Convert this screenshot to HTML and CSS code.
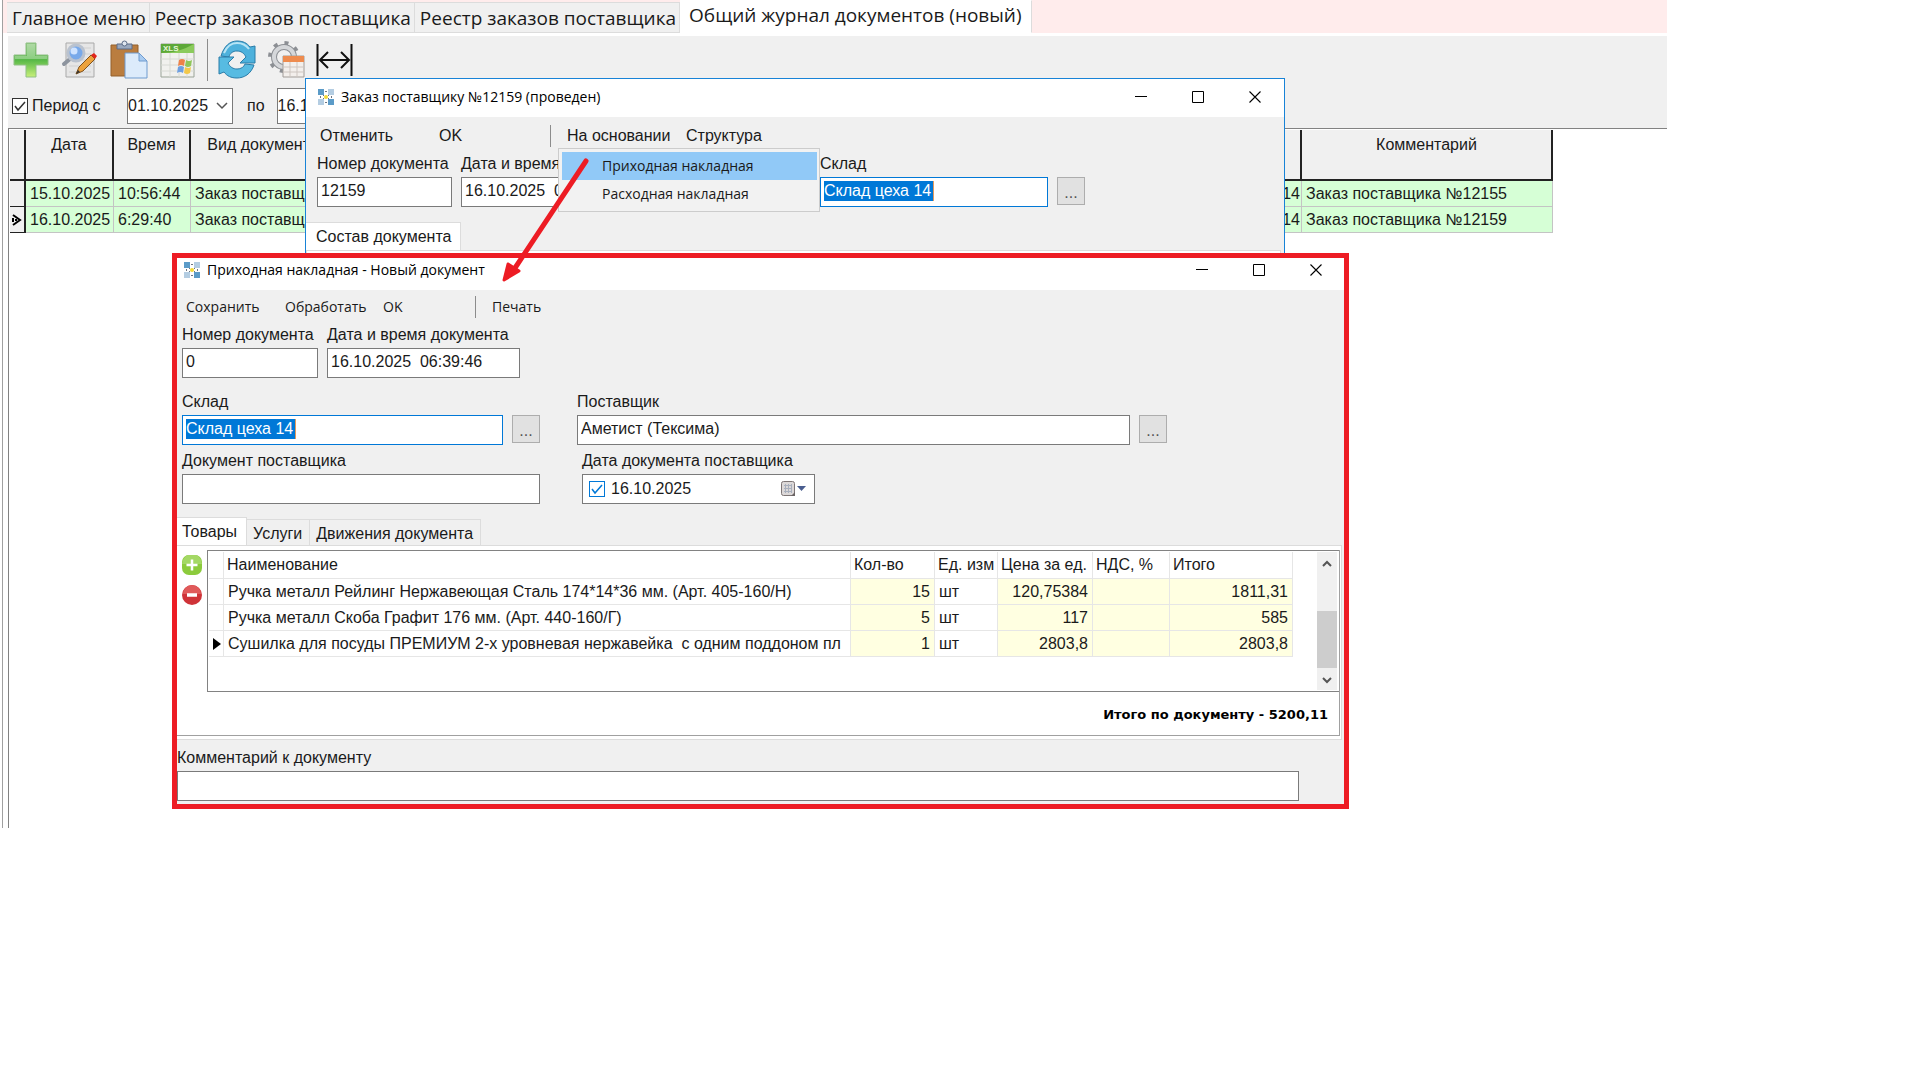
FILE: index.html
```html
<!DOCTYPE html>
<html lang="ru">
<head>
    <meta charset="UTF-8">
    <meta name="viewport" content="width=device-width, initial-scale=1.0">
    <title>Общий журнал документов</title>
    <link rel="stylesheet" href="styles.css">
</head>
<body>

<svg class="sprite" aria-hidden="true">
    <symbol id="logo" viewBox="0 0 16 16">
        <path fill="#5b9bc8" d="M0 0h6v6H0zM10 10h6v6h-6z"/>
        <path fill="#b4cde2" d="M10 0h6v6h-6zM0 10h6v6H0z"/>
        <path fill="#6c7480" d="M7 2h2v1H7zM2 7h1v2H2zM13 7h1v2h-1zM7 13h2v1H7zM5 6h1v1H5zM10 6h1v1h-1zM5 9h1v1H5zM10 9h1v1h-1z"/>
        <circle cx="8" cy="8" r="2" fill="#f3d936"/>
    </symbol>
    <symbol id="min" viewBox="0 0 12 12"><path d="M0 5.500h12" stroke="#000"/></symbol>
    <symbol id="max" viewBox="0 0 12 12"><path d="M.5.5h11v11H.5z" fill="none" stroke="#000"/></symbol>
    <symbol id="close" viewBox="0 0 12 12"><path d="M.5.5l11 11M11.5.5l-11 11" stroke="#000" stroke-width="1.1"/></symbol>
</svg>

<main class="app">
    <nav class="app-tabs">
        <button class="app-tab">Главное меню</button>
        <button class="app-tab">Реестр заказов поставщика</button>
        <button class="app-tab">Реестр заказов поставщика</button>
        <button class="app-tab active">Общий журнал документов (новый)</button>
    </nav>

    <div class="journal">
        <div class="toolbar">
            <button class="tool" aria-label="Добавить">
                <svg viewBox="0 0 40 40">
                    <linearGradient id="gPlus" x2="0" y2="1"><stop offset="0" stop-color="#8fca80"/><stop offset=".5" stop-color="#57b847"/><stop offset="1" stop-color="#c8f07a"/></linearGradient>
                    <path d="M15 3h10v12h12v10H25v12H15V25H3V15h12z" fill="url(#gPlus)" stroke="#8fbf85"/>
                    <path d="M16 4h8v12h12v3H4v-3h12z" fill="#fff" opacity=".3"/>
                </svg>
            </button>
            <button class="tool" aria-label="Просмотр">
                <svg viewBox="0 0 40 40">
                    <path d="M6 3h28v34H6z" fill="#e6e6e6" stroke="#a9a9a9"/>
                    <path d="M9 8h22M9 14h22M9 20h22M9 26h22M9 32h22" stroke="#d0d0d0"/>
                    <path d="M10 19l-6 5" stroke="#8d949e" stroke-width="4" stroke-linecap="round"/>
                    <circle cx="16" cy="13" r="8" fill="#78a9ea" stroke="#b9c2cf" stroke-width="3"/>
                    <circle cx="14" cy="11" r="3.500" fill="#cfe3ff"/>
                    <path d="M16 34l3-7L31 15l4 4-12 12z" fill="#eda23c" stroke="#80531f"/>
                    <path d="M31 15l3-2 3 3-2 3z" fill="#e2261d"/>
                    <path d="M16 34l2-4 2 2z" fill="#333"/>
                </svg>
            </button>
            <button class="tool" aria-label="Вставить">
                <svg viewBox="0 0 40 40">
                    <path d="M2 5h27v31H2z" fill="#ba7d3f" stroke="#93602c"/>
                    <path d="M8 4h15v5H8z" fill="#9aa9bf" stroke="#5c6d88"/>
                    <circle cx="15.500" cy="3.500" r="2.500" fill="#dfe6ef" stroke="#5c6d88"/>
                    <path d="M16 13h14l8 8v17H16z" fill="#dcebfb" stroke="#6f9bcf"/>
                    <path d="M30 13v8h8z" fill="#a9cbf0" stroke="#6f9bcf"/>
                </svg>
            </button>
            <button class="tool" aria-label="Выгрузить в XLS">
                <svg viewBox="0 0 40 40">
                    <path d="M3 4h33v33H3z" fill="#f1f1ee" stroke="#9aa397"/>
                    <path d="M3 4h33v9H3z" fill="#5da838"/>
                    <path d="M3 13c12 0 22-3 33-9v9z" fill="#8bcb5c"/>
                    <path d="M3 19h33M3 25h33M3 31h33M12 13v24M21 13v24M29 13v24" stroke="#d8dad5"/>
                    <text x="5" y="11" class="xls">XLS</text>
                    <path d="M21 20q3-2 6 0l-1 6q-3-2-6 0z" fill="#ee8148"/>
                    <path d="M28 20q3 2 6 0l-1 6q-3 2-6 0z" fill="#8fc65a"/>
                    <path d="M20 27q3-2 6 0l-1 6q-3-2-6 0z" fill="#6f9fe0"/>
                    <path d="M27 27q3 2 6 0l-1 6q-3 2-6 0z" fill="#f2c84b"/>
                </svg>
            </button>
            <span class="tool-sep"></span>
            <button class="tool" aria-label="Обновить">
                <svg viewBox="0 0 40 40">
                    <path d="M4 16C7 6 13 1 20 1c6 0 10 2 13 6l5-1v17H23l6-6c-2-4-5-6-9-6s-7 2-8 6z" fill="#4db1dc" stroke="#2b7ca8"/>
                    <path d="M37 25c-3 9-10 13-17 13-6 0-10-2-13-6l-5 2V17h15l-6 6c2 4 5 6 9 6s7-2 8-5z" fill="#57bbe2" stroke="#2b7ca8"/>
                    <path d="M7 13c3-7 8-10 13-10 5 0 9 2 12 6" fill="none" stroke="#b7e4f5" stroke-width="2"/>
                </svg>
            </button>
            <button class="tool" aria-label="Настройка">
                <svg viewBox="0 0 40 40">
                    <circle cx="18" cy="17" r="14" fill="none" stroke="#8c8f94" stroke-width="4" stroke-dasharray="4 7"/>
                    <circle cx="18" cy="17" r="10" fill="none" stroke="#8c8f94" stroke-width="6"/>
                    <circle cx="18" cy="17" r="10" fill="none" stroke="#d5d7da" stroke-width="4"/>
                    <path d="M17 16h21v21H17z" fill="#f3efec" stroke="#a19c98"/>
                    <path d="M17 16h21v6H17z" fill="#ee8b4e"/>
                    <path d="M17 27h21M17 32h21M24 22v15M31 22v15" stroke="#cdc5c0"/>
                </svg>
            </button>
            <button class="tool" aria-label="Ширина колонок">
                <svg viewBox="0 0 40 40">
                    <path d="M2.500 4v32M36.500 4v32M6 20h27M13 12l-8 8 8 8M26 12l8 8-8 8" fill="none" stroke="#111" stroke-width="2"/>
                </svg>
            </button>
        </div>

        <div class="period">
            <input type="checkbox" id="period" class="check" checked>
            <label for="period">Период с</label>
            <select class="date-select" aria-label="Начало периода"><option>01.10.2025</option></select>
            <label for="dateTo">по</label>
            <select class="date-select" id="dateTo"><option>16.10.2025</option></select>
        </div>

        <div class="journal-grid">
            <table class="journal-table">
                <colgroup><col class="c-mark"><col class="c-date"><col class="c-time"><col class="c-kind"><col><col class="c-comment"></colgroup>
                <thead>
                    <tr><th></th><th>Дата</th><th>Время</th><th>Вид документа</th><th>Склад</th><th>Комментарий</th></tr>
                </thead>
                <tbody>
                    <tr><td class="mark"></td><td>15.10.2025</td><td>10:56:44</td><td>Заказ поставщика</td><td class="num">Склад цеха 14</td><td>Заказ поставщика №12155</td></tr>
                    <tr>
                        <td class="mark"><svg viewBox="0 0 10 14"><path d="M1 2l7 5-7 5M1 5v4M4 6v2" fill="none" stroke="#000" stroke-width="2"/></svg></td>
                        <td>16.10.2025</td><td>6:29:40</td><td>Заказ поставщика</td><td class="num">Склад цеха 14</td><td>Заказ поставщика №12159</td>
                    </tr>
                </tbody>
            </table>
        </div>
    </div>
</main>

<!-- Заказ поставщику -->
<section class="window order">
    <header class="titlebar">
        <svg class="logo"><use href="#logo"/></svg>
        <span class="title">Заказ поставщику №12159 (проведен)</span>
        <button class="win-btn" aria-label="Свернуть"><svg><use href="#min"/></svg></button>
        <button class="win-btn" aria-label="Развернуть"><svg><use href="#max"/></svg></button>
        <button class="win-btn" aria-label="Закрыть"><svg><use href="#close"/></svg></button>
    </header>
    <div class="menubar">
        <button>Отменить</button>
        <button>OK</button>
        <span class="menu-sep"></span>
        <button>На основании</button>
        <button>Структура</button>
    </div>
    <div class="fields">
        <div class="field">
            <label for="orderNum">Номер документа</label>
            <input type="text" id="orderNum" value="12159">
        </div>
        <div class="field">
            <label for="orderDate">Дата и время документа</label>
            <input type="text" id="orderDate" value="16.10.2025&nbsp; 06:29:40">
        </div>
        <div class="field">
            <label for="orderStore">Склад</label>
            <input type="text" id="orderStore" class="selected" value="Склад цеха 14">
        </div>
        <button class="pick" aria-label="Выбрать склад">...</button>
    </div>
    <div class="tabs">
        <button class="tab active">Состав документа</button>
    </div>
    <div class="order-page"></div>
</section>

<div class="popup">
    <button class="popup-item current">Приходная накладная</button>
    <button class="popup-item">Расходная накладная</button>
</div>

<!-- Приходная накладная -->
<section class="window invoice">
    <header class="titlebar">
        <svg class="logo"><use href="#logo"/></svg>
        <span class="title">Приходная накладная - Новый документ</span>
        <button class="win-btn" aria-label="Свернуть"><svg><use href="#min"/></svg></button>
        <button class="win-btn" aria-label="Развернуть"><svg><use href="#max"/></svg></button>
        <button class="win-btn" aria-label="Закрыть"><svg><use href="#close"/></svg></button>
    </header>
    <div class="menubar">
        <button>Сохранить</button>
        <button>Обработать</button>
        <button>OK</button>
        <span class="menu-sep"></span>
        <button>Печать</button>
    </div>
    <div class="form">
        <div class="form-row">
            <div class="field w-num">
                <label for="num">Номер документа</label>
                <input type="text" id="num" value="0">
            </div>
            <div class="field w-datetime">
                <label for="datetime">Дата и время документа</label>
                <input type="text" id="datetime" value="16.10.2025&nbsp; 06:39:46">
            </div>
        </div>
        <div class="form-row party">
            <div class="with-pick w-half">
                <div class="field">
                    <label for="store">Склад</label>
                    <input type="text" id="store" class="selected" value="Склад цеха 14">
                </div>
                <button class="pick" aria-label="Выбрать склад">...</button>
            </div>
            <div class="with-pick supplier">
                <div class="field">
                    <label for="supplier">Поставщик</label>
                    <input type="text" id="supplier" value="Аметист (Тексима)">
                </div>
                <button class="pick" aria-label="Выбрать поставщика">...</button>
            </div>
        </div>
        <div class="form-row document">
            <div class="field w-half">
                <label for="supDoc">Документ поставщика</label>
                <input type="text" id="supDoc">
            </div>
            <div class="field w-supdate">
                <label for="supDate">Дата документа поставщика</label>
                <div class="datebox">
                    <input type="checkbox" class="check blue" aria-label="Указать дату" checked>
                    <input type="text" id="supDate" value="16.10.2025">
                    <button aria-label="Календарь">
                        <svg viewBox="0 0 26 18">
                            <rect x="1.500" y="1.500" width="13" height="14" rx="2" fill="#dcd8d8" stroke="#7d7575"/>
                            <path d="M4 5.500h8M4 8.500h8M4 11.500h8M5.500 4v9M8.500 4v9M11.500 4v9" stroke="#a9b0bd"/>
                            <path d="M11 16l4-4v4z" fill="#6b6464"/>
                            <path d="M17 6h9l-4.500 5z" fill="#4a5d8f"/>
                        </svg>
                    </button>
                </div>
            </div>
        </div>
    </div>
    <div class="tabs">
        <button class="tab active">Товары</button>
        <button class="tab">Услуги</button>
        <button class="tab">Движения документа</button>
    </div>
    <div class="panel">
        <div class="goods">
            <div class="goods-top">
                <div class="row-btns">
                    <button aria-label="Добавить строку">
                        <svg viewBox="0 0 20 20"><rect width="20" height="20" rx="7" fill="#8ccb3c"/><path d="M0 9a9 9 0 0 1 20 0z" fill="#a4d865"/><path d="M10 4.500v11M4.500 10h11" stroke="#fff" stroke-width="2.500"/></svg>
                    </button>
                    <button aria-label="Удалить строку">
                        <svg viewBox="0 0 20 20"><circle cx="10" cy="10" r="10" fill="#cf3338"/><path d="M1 9a9 9 0 0 1 18 0z" fill="#e05a5a"/><path d="M5 10h10" stroke="#fff" stroke-width="3.500"/></svg>
                    </button>
                </div>
                <div class="goods-grid">
                    <div class="goods-scroll">
                        <table class="goods-table">
                            <colgroup><col class="g-mark"><col><col class="g-qty"><col class="g-unit"><col class="g-price"><col class="g-vat"><col class="g-sum"></colgroup>
                            <thead>
                                <tr><th></th><th>Наименование</th><th>Кол-во</th><th>Ед. изм</th><th>Цена за ед.</th><th>НДС, %</th><th>Итого</th></tr>
                            </thead>
                            <tbody>
                                <tr><td></td><td>Ручка металл Рейлинг Нержавеющая Сталь 174*14*36 мм. (Арт. 405-160/Н)</td><td class="calc">15</td><td>шт</td><td class="calc">120,75384</td><td class="calc"></td><td class="calc">1811,31</td></tr>
                                <tr><td></td><td>Ручка металл Скоба Графит 176 мм. (Арт. 440-160/Г)</td><td class="calc">5</td><td>шт</td><td class="calc">117</td><td class="calc"></td><td class="calc">585</td></tr>
                                <tr><td class="cur"><svg viewBox="0 0 8 12"><path d="M0 0l8 6-8 6z"/></svg></td><td>Сушилка для посуды ПРЕМИУМ 2-х уровневая нержавейка&nbsp; с одним поддоном пл</td><td class="calc">1</td><td>шт</td><td class="calc">2803,8</td><td class="calc"></td><td class="calc">2803,8</td></tr>
                            </tbody>
                        </table>
                    </div>
                    <div class="scrollbar">
                        <svg viewBox="0 0 10 8"><path d="M1 6l4-4 4 4" fill="none" stroke="#555" stroke-width="2"/></svg>
                        <span class="thumb"></span>
                        <svg viewBox="0 0 10 8"><path d="M1 2l4 4 4-4" fill="none" stroke="#555" stroke-width="2"/></svg>
                    </div>
                </div>
            </div>
            <div class="total">Итого по документу - 5200,11</div>
        </div>
    </div>
    <div class="field comment">
        <label for="comment">Комментарий к документу</label>
        <input type="text" id="comment">
    </div>
</section>

<!-- стрелка от пункта меню к открытому документу -->
<svg class="arrow" viewBox="0 0 90 126" aria-hidden="true">
    <path d="M85 5L14 112" stroke="#ed1c24" stroke-width="5" stroke-linecap="round"/>
    <path d="M3 124L7 108l11 7z" fill="#ed1c24" stroke="#ed1c24" stroke-width="3" stroke-linejoin="round"/>
</svg>

</body>
</html>
```
FILE: styles.css
```css
* {
    box-sizing: border-box;
}
body {
    margin: 0;
    background-color: #fff;
    color: #1a1a1a;
    font-family: "Liberation Sans", Arial, sans-serif;
    font-size: 16px;
    line-height: 20px;
    overflow: hidden;
}
button, input, select {
    font: inherit;
    color: inherit;
    margin: 0;
}
button {
    background: none;
    border: 0;
    padding: 0;
    text-align: left;
    white-space: nowrap;
}
.sprite {
    position: absolute;
    width: 0;
    height: 0;
}

/* главное окно */
.app {
    display: flex;
    flex-direction: column;
    margin: 0 253px 0 2px;
    height: calc(100vh - 252px);
    border-left: 1px solid #a0a0a0;
}
.app-tabs {
    display: flex;
    align-items: flex-end;
    height: 33px;
    padding-left: 4px;
    background-color: #ffecec;
    font-family: "Open Sans", "Noto Sans", sans-serif;
    font-size: 19px;
}
.app-tab {
    height: 31px;
    padding: 0 3px 0 5px;
    background-color: #f0f0f0;
    border: 1px solid #dcdcdc;
    border-left: 0;
}
.app-tab.active {
    height: 33px;
    padding: 0 9px 4px;
    background-color: #fff;
    border-color: #fff #dcdcdc #fff #fff;
}
.journal {
    flex: 1;
    display: flex;
    flex-direction: column;
    padding: 3px 0 0 5px;
}
.toolbar {
    display: flex;
    align-items: center;
    gap: 9px;
    height: 48px;
    padding-left: 3px;
    background-color: #f0f0f0;
}
.tool, .tool svg {
    display: block;
    width: 40px;
    height: 40px;
}
.tool-sep {
    width: 1px;
    height: 42px;
    background-color: #8c8c8c;
}
.xls {
    font-size: 8px;
    font-weight: bold;
    fill: #e8f7dc;
}
.period {
    display: flex;
    align-items: center;
    height: 44px;
    padding-left: 4px;
    background-color: #f0f0f0;
}
.period label {
    padding: 0 12px 0 4px;
}
.period .check + label {
    width: 99px;
}
.date-select {
    width: 106px;
    height: 36px;
    padding: 0;
    border: 1px solid #7a7a7a;
    border-radius: 0;
    appearance: none;
    background: #fff url("data:image/svg+xml,%3Csvg xmlns='http://www.w3.org/2000/svg' width='12' height='8'%3E%3Cpath d='M1 1l5 5 5-5' fill='none' stroke='%23555' stroke-width='1.500'/%3E%3C/svg%3E") no-repeat right 4px center;
}
.date-select + label {
    padding-left: 14px;
}
.check {
    appearance: none;
    width: 16px;
    height: 16px;
    border: 1px solid #333;
    background: #fff url("data:image/svg+xml,%3Csvg xmlns='http://www.w3.org/2000/svg' width='14' height='14'%3E%3Cpath d='M2 7l3 4 7-8' fill='none' stroke='%23333' stroke-width='1.500'/%3E%3C/svg%3E") no-repeat center;
}
.check.blue {
    flex: none;
    border-color: #0078d7;
    background-image: url("data:image/svg+xml,%3Csvg xmlns='http://www.w3.org/2000/svg' width='14' height='14'%3E%3Cpath d='M2 7l3 4 7-8' fill='none' stroke='%230078d7' stroke-width='1.500'/%3E%3C/svg%3E");
}
.journal-grid {
    flex: 1;
    padding: 1px 114px 0 1px;
    border-top: 1px solid #828282;
    border-left: 1px solid #828282;
}
.journal-table, .goods-table {
    table-layout: fixed;
    width: 100%;
    border-collapse: separate;
    border-spacing: 0;
}
.c-mark { width: 16px; }
.c-date { width: 88px; }
.c-time { width: 77px; }
.c-kind { width: 146px; }
.c-comment { width: 251px; }
.journal-table th {
    height: 51px;
    padding: 5px 0;
    vertical-align: top;
    font-weight: normal;
    background-color: #f0f0f0;
    border-right: 2px solid #222;
    border-bottom: 2px solid #222;
}
.journal-table td {
    height: 26px;
    padding: 0 4px;
    overflow: hidden;
    white-space: nowrap;
    background-color: #d6ffd6;
    border-right: 1px solid #c4c4c4;
    border-bottom: 1px solid #c4c4c4;
}
.journal-table .num {
    padding: 0 1px;
    text-align: right;
}
.journal-table .mark {
    padding: 0 2px;
    background-color: #f0f0f0;
    border-right: 2px solid #222;
    border-bottom: 1px solid #222;
}
.mark svg {
    display: block;
    width: 10px;
    height: 14px;
}

/* окна документов */
.window {
    position: absolute;
    background-color: #f0f0f0;
}
.order {
    top: 78px;
    left: 305px;
    width: 980px;
    border: 1px solid #1883d7;
}
.invoice {
    top: 253px;
    left: 172px;
    width: 1177px;
    border: 5px solid #ed1c24;
}
.titlebar {
    display: flex;
    align-items: center;
    height: 38px;
    padding: 0 1px 2px 12px;
    background-color: #fff;
    color: #000;
    font-family: "Open Sans", "Noto Sans", sans-serif;
    font-size: 14px;
}
.invoice .titlebar {
    height: 32px;
    padding: 0 0 8px 7px;
}
.logo {
    width: 16px;
    height: 16px;
    margin-right: 7px;
}
.title {
    flex: 1;
}
.win-btn {
    width: 57px;
    height: 24px;
    text-align: center;
}
.win-btn svg {
    display: block;
    width: 12px;
    height: 12px;
    margin: 0 auto;
}
.menubar {
    display: grid;
    grid-template-columns: 119px 111px 17px 119px auto;
    align-items: center;
    height: 37px;
    padding-left: 14px;
}
.invoice .menubar {
    grid-template-columns: 99px 98px 92px 17px auto;
    height: 35px;
    padding: 0 0 2px 9px;
    font-family: "Open Sans", "Noto Sans", sans-serif;
    font-size: 14px;
}
.menu-sep {
    width: 1px;
    height: 22px;
    background-color: #8c8c8c;
}
.field {
    display: flex;
    flex-direction: column;
    gap: 2px;
    white-space: nowrap;
}
.field label {
    height: 21px;
}
.field > input, .datebox {
    width: 100%;
    height: 30px;
    padding: 0 3px 2px;
    border: 1px solid #7a7a7a;
    background-color: #fff;
    outline: 0;
}
.field > input.selected {
    color: #fff;
    border-color: #0078d7;
    background-image: linear-gradient(90deg, #0078d7 109px, #e59a5c 109px);
    background-repeat: no-repeat;
    background-position: 3px 3px;
    background-size: 110px 20px;
}
.pick {
    flex: none;
    width: 28px;
    height: 28px;
    margin-bottom: 2px;
    padding-top: 4px;
    text-align: center;
    color: #555;
    background-color: #e1e1e1;
    border: 1px solid #adadad;
}
.fields {
    display: grid;
    grid-template-columns: 135px 350px 228px 28px;
    gap: 9px;
    align-items: end;
    padding: 0 11px 15px;
}
.tabs {
    display: flex;
    align-items: flex-end;
}
.tab {
    height: 26px;
    padding: 2px 7px 0 6px;
    border: 1px solid #dcdcdc;
    border-width: 1px 1px 0 0;
}
.tab.active {
    height: 28px;
    padding: 0 9px 0 10px;
    background-color: #fff;
}
.order-page {
    height: 200px;
    margin-right: 3px;
    border: 1px solid #dcdcdc;
    background-color: #fff;
}
.popup {
    position: absolute;
    top: 148px;
    left: 558px;
    display: flex;
    flex-direction: column;
    width: 262px;
    padding: 3px 2px 3px 3px;
    background-color: #f2f2f2;
    border: 1px solid #ccc;
    font-family: "Open Sans", "Noto Sans", sans-serif;
    font-size: 14px;
}
.popup-item {
    height: 28px;
    padding: 0 0 1px 40px;
}
.popup-item.current {
    background-color: #91c9f7;
}

/* приходная накладная */
.form {
    display: flex;
    flex-direction: column;
    padding: 0 5px 13px;
}
.form-row {
    display: flex;
    gap: 9px;
}
.form-row.party {
    gap: 37px;
    padding: 14px 172px 6px 0;
}
.form-row.document {
    gap: 42px;
}
.w-num { width: 136px; }
.w-datetime { width: 193px; }
.w-half { width: 358px; }
.w-supdate { width: 233px; }
.with-pick {
    display: flex;
    align-items: flex-end;
    gap: 9px;
}
.with-pick .field, .supplier {
    flex: 1;
}
.datebox {
    display: flex;
    align-items: center;
    gap: 6px;
    padding: 0 8px 0 6px;
}
.datebox input[type="text"] {
    flex: 1;
    width: 0;
    padding: 0;
    border: 0;
    outline: 0;
}
.datebox svg {
    display: block;
    width: 26px;
    height: 18px;
}
.invoice .tab.active {
    padding: 0 9px 0 5px;
}
.panel {
    margin-right: 2px;
    padding: 4px 1px 3px 0;
    background-color: #fff;
    border: 1px solid #dcdcdc;
    border-left: 0;
}
.goods {
    border-right: 1px solid #a0a0a0;
    border-bottom: 1px solid #a0a0a0;
}
.goods-top {
    display: flex;
}
.row-btns {
    display: flex;
    flex-direction: column;
    gap: 10px;
    width: 30px;
    padding: 5px;
}
.row-btns svg {
    display: block;
    width: 20px;
    height: 20px;
}
.goods-grid {
    flex: 1;
    display: flex;
    min-width: 0;
    height: 142px;
    padding: 1px 2px 1px 1px;
    border: 1px solid #828282;
    border-right: 0;
}
.goods-scroll {
    flex: 1;
    min-width: 0;
    padding-right: 24px;
}
.g-mark { width: 15px; }
.g-qty { width: 84px; }
.g-unit { width: 63px; }
.g-price { width: 95px; }
.g-vat { width: 77px; }
.g-sum { width: 123px; }
.goods-table th, .goods-table td {
    height: 26px;
    padding: 0 3px;
    overflow: hidden;
    white-space: nowrap;
    text-align: left;
    font-weight: normal;
    border-right: 1px solid #e6e6e6;
    border-bottom: 1px solid #e6e6e6;
}
.goods-table th {
    height: 27px;
}
.goods-table td {
    padding: 0 4px;
}
.goods-table .calc {
    text-align: right;
    background-color: #ffffe1;
}
.goods-table .cur {
    padding: 0 4px;
}
.cur svg {
    display: block;
    width: 8px;
    height: 12px;
}
.scrollbar {
    display: flex;
    flex-direction: column;
    align-items: center;
    width: 20px;
    padding: 8px 0 6px;
    background-color: #f0f0f0;
}
.scrollbar svg {
    width: 10px;
    height: 8px;
}
.thumb {
    width: 20px;
    height: 57px;
    margin: auto 0 8px;
    background-color: #cdcdcd;
}
.total {
    height: 43px;
    padding: 13px 11px 0 0;
    text-align: right;
    color: #000;
    font-family: "DejaVu Sans", sans-serif;
    font-size: 13px;
    font-weight: bold;
}
.comment {
    padding: 8px 45px 3px 0;
}

.arrow {
    position: absolute;
    top: 156px;
    left: 501px;
    width: 90px;
    height: 126px;
}
```
